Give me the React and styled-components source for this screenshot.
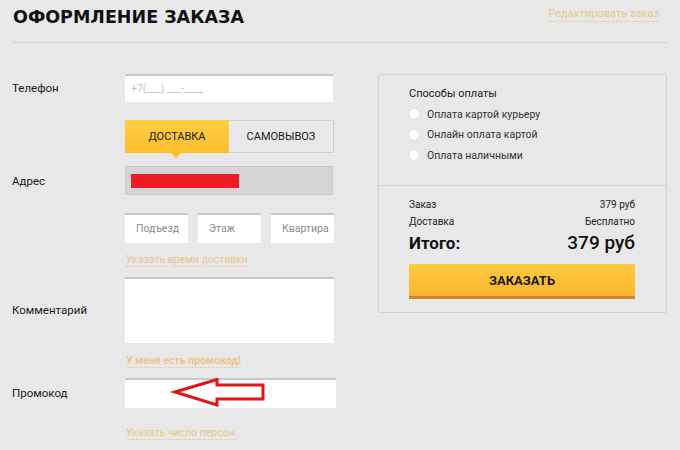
import React from 'react';
import styled, { createGlobalStyle } from 'styled-components';

const Global = createGlobalStyle`
  body {
    margin: 0;
    background: #e8e8e8;
    font-family: Roboto, "Liberation Sans", sans-serif;
    color: #222;
  }
`;

function App() {
  return (
    <Page>
      <Global />
      <Header>
        <Title>ОФОРМЛЕНИЕ ЗАКАЗА</Title>
        <DottedLink>Редактировать заказ</DottedLink>
      </Header>
      <Main>
        <Form>
          <Row $top={31}>
            <Label>Телефон</Label>
            <Input $w={208} $h={28}>
              <Placeholder $light>+7(___) ___-____</Placeholder>
            </Input>
          </Row>
          <Tabs>
            <TabActive>ДОСТАВКА</TabActive>
            <Tab>САМОВЫВОЗ</Tab>
          </Tabs>
          <Row $top={13}>
            <Label>Адрес</Label>
            <AddressInput>
              <Redacted />
            </AddressInput>
          </Row>
          <SmallRow>
            <Input $w={63} $h={30}>
              <Placeholder>Подъезд</Placeholder>
            </Input>
            <Input $w={63} $h={30}>
              <Placeholder>Этаж</Placeholder>
            </Input>
            <Input $w={63} $h={30}>
              <Placeholder>Квартира</Placeholder>
            </Input>
          </SmallRow>
          <FieldLink $top={10}>Указать время доставки</FieldLink>
          <Row $top={10}>
            <Label>Комментарий</Label>
            <Input $w={209} $h={66} />
          </Row>
          <FieldLink $top={11} $bold>
            У меня есть промокод!
          </FieldLink>
          <Row $top={10}>
            <Label>Промокод</Label>
            <Input $w={211} $h={30}>
              <Arrow width="150" height="30" viewBox="0 0 150 30">
                <polygon
                  points="50,14 92,1.5 92,7 138,7 138,21 92,21 92,27 50,14"
                  fill="none"
                  stroke="#e3131b"
                  strokeWidth="3"
                  strokeLinejoin="miter"
                />
              </Arrow>
            </Input>
          </Row>
          <FieldLink $top={18}>Указать число персон</FieldLink>
        </Form>
        <Panel>
          <PaySection>
            <PayTitle>Способы оплаты</PayTitle>
            {['Оплата картой курьеру', 'Онлайн оплата картой', 'Оплата наличными'].map(
              (t) => (
                <Radio key={t}>
                  <Dot />
                  {t}
                </Radio>
              ),
            )}
          </PaySection>
          <Summary>
            <SumRow>
              <span>Заказ</span>
              <span>379 руб</span>
            </SumRow>
            <SumRow>
              <span>Доставка</span>
              <span>Бесплатно</span>
            </SumRow>
            <TotalRow>
              <TotalLabel>Итого:</TotalLabel>
              <TotalValue>379 руб</TotalValue>
            </TotalRow>
            <OrderButton>ЗАКАЗАТЬ</OrderButton>
          </Summary>
        </Panel>
      </Main>
    </Page>
  );
}

export default App;

const Page = styled.div`
  width: 680px;
  height: 450px;
  padding: 0 13px 0 12px;
  box-sizing: border-box;
  overflow: hidden;
`;

const Header = styled.header`
  display: flex;
  align-items: flex-end;
  justify-content: space-between;
  height: 43px;
  border-bottom: 1px solid #d3d3d3;
  box-sizing: border-box;
  padding: 0 8px 14px 1px;
`;

const Title = styled.h1`
  margin: 0;
  font-family: "DejaVu Sans", sans-serif;
  font-size: 17.5px;
  font-weight: 700;
  color: #111;
  line-height: 1;
  position: relative;
  top: -2px;
`;

const DottedLink = styled.span`
  font-size: 11px;
  color: #e9c68e;
  border-bottom: 1px dotted #e9c68e;
  line-height: 14px;
  position: relative;
  top: -6px;
`;

const Main = styled.div`
  display: flex;
  justify-content: space-between;
`;

const Form = styled.div`
  width: 340px;
  display: flex;
  flex-direction: column;
`;

const Row = styled.div`
  display: flex;
  align-items: center;
  margin-top: ${(p) => p.$top}px;
`;

const Label = styled.div`
  width: 113px;
  font-size: 11.5px;
  color: #1a1a1a;
`;

const Input = styled.div`
  position: relative;
  width: ${(p) => p.$w}px;
  height: ${(p) => p.$h}px;
  background: #fff;
  box-shadow: inset 0 2px 0 #c8c8c8;
  display: flex;
  align-items: center;
  box-sizing: border-box;
  padding-left: 11px;
  flex-shrink: 0;
`;

const Placeholder = styled.span`
  font-size: ${(p) => (p.$light ? 10.5 : 10.5)}px;
  color: ${(p) => (p.$light ? '#c4c4c4' : '#8a8a8a')};
  margin-left: ${(p) => (p.$light ? -5 : 0)}px;
  white-space: nowrap;
`;

const Tabs = styled.div`
  display: flex;
  margin: 18px 0 0 113px;
  height: 33px;
`;

const TabActive = styled.div`
  position: relative;
  width: 104px;
  display: flex;
  align-items: center;
  justify-content: center;
  font-size: 11px;
  color: #1a1a1a;
  background: linear-gradient(#ffce45, #fbbd2d);
  &::after {
    content: '';
    position: absolute;
    left: 46px;
    bottom: -5px;
    border-left: 5px solid transparent;
    border-right: 5px solid transparent;
    border-top: 5px solid #fbbd2d;
  }
`;

const Tab = styled.div`
  width: 105px;
  display: flex;
  align-items: center;
  justify-content: center;
  font-size: 11px;
  color: #1a1a1a;
  border: 1px solid #cfcfcf;
  border-left: none;
  box-sizing: border-box;
`;

const AddressInput = styled.div`
  width: 208px;
  height: 29px;
  background: #d5d5d5;
  border: 1px solid #c9c9c9;
  box-sizing: border-box;
  display: flex;
  align-items: center;
  padding-left: 5px;
`;

const Redacted = styled.div`
  width: 108px;
  height: 14px;
  background: #ec1c24;
`;

const SmallRow = styled.div`
  display: flex;
  gap: 10px;
  margin: 18px 0 0 113px;
`;

const FieldLink = styled.span`
  align-self: flex-start;
  margin: ${(p) => p.$top}px 0 0 114px;
  font-size: 10.5px;
  font-weight: ${(p) => (p.$bold ? 700 : 400)};
  color: #e9c68e;
  border-bottom: 1px dotted #e9c68e;
  line-height: 13px;
`;

const Arrow = styled.svg`
  position: absolute;
  left: 0;
  top: 0;
`;

const Panel = styled.div`
  margin-top: 31px;
  width: 289px;
  height: 239px;
  border: 1px solid #d2d2d2;
  border-radius: 2px;
  box-sizing: border-box;
`;

const PaySection = styled.div`
  height: 111px;
  border-bottom: 1px solid #d2d2d2;
  padding: 11px 0 0 30px;
  box-sizing: border-box;
`;

const PayTitle = styled.div`
  font-size: 11px;
  color: #1a1a1a;
  line-height: 16px;
  margin-bottom: 2px;
`;

const Radio = styled.div`
  display: flex;
  align-items: center;
  font-size: 10.5px;
  color: #333;
  height: 20.5px;
`;

const Dot = styled.span`
  width: 10px;
  height: 10px;
  border-radius: 50%;
  background: #fff;
  box-shadow: 0 0 0 1px #ddd;
  margin-right: 8px;
`;

const Summary = styled.div`
  padding: 10px 31px 0 30px;
`;

const SumRow = styled.div`
  display: flex;
  justify-content: space-between;
  font-size: 10px;
  color: #222;
  line-height: 17px;
`;

const TotalRow = styled.div`
  display: flex;
  justify-content: space-between;
  align-items: baseline;
  margin-top: 1px;
  line-height: 24px;
`;

const TotalLabel = styled.span`
  font-size: 17px;
  font-weight: 700;
  color: #111;
`;

const TotalValue = styled.span`
  font-size: 19px;
  font-weight: 500;
  color: #111;
`;

const OrderButton = styled.div`
  margin-top: 9px;
  height: 35px;
  display: flex;
  align-items: center;
  justify-content: center;
  font-size: 13px;
  font-weight: 700;
  color: #1a1a1a;
  background: linear-gradient(#ffc93f, #fbb52d);
  border-bottom: 3px solid #d9822b;
  box-sizing: border-box;
`;
